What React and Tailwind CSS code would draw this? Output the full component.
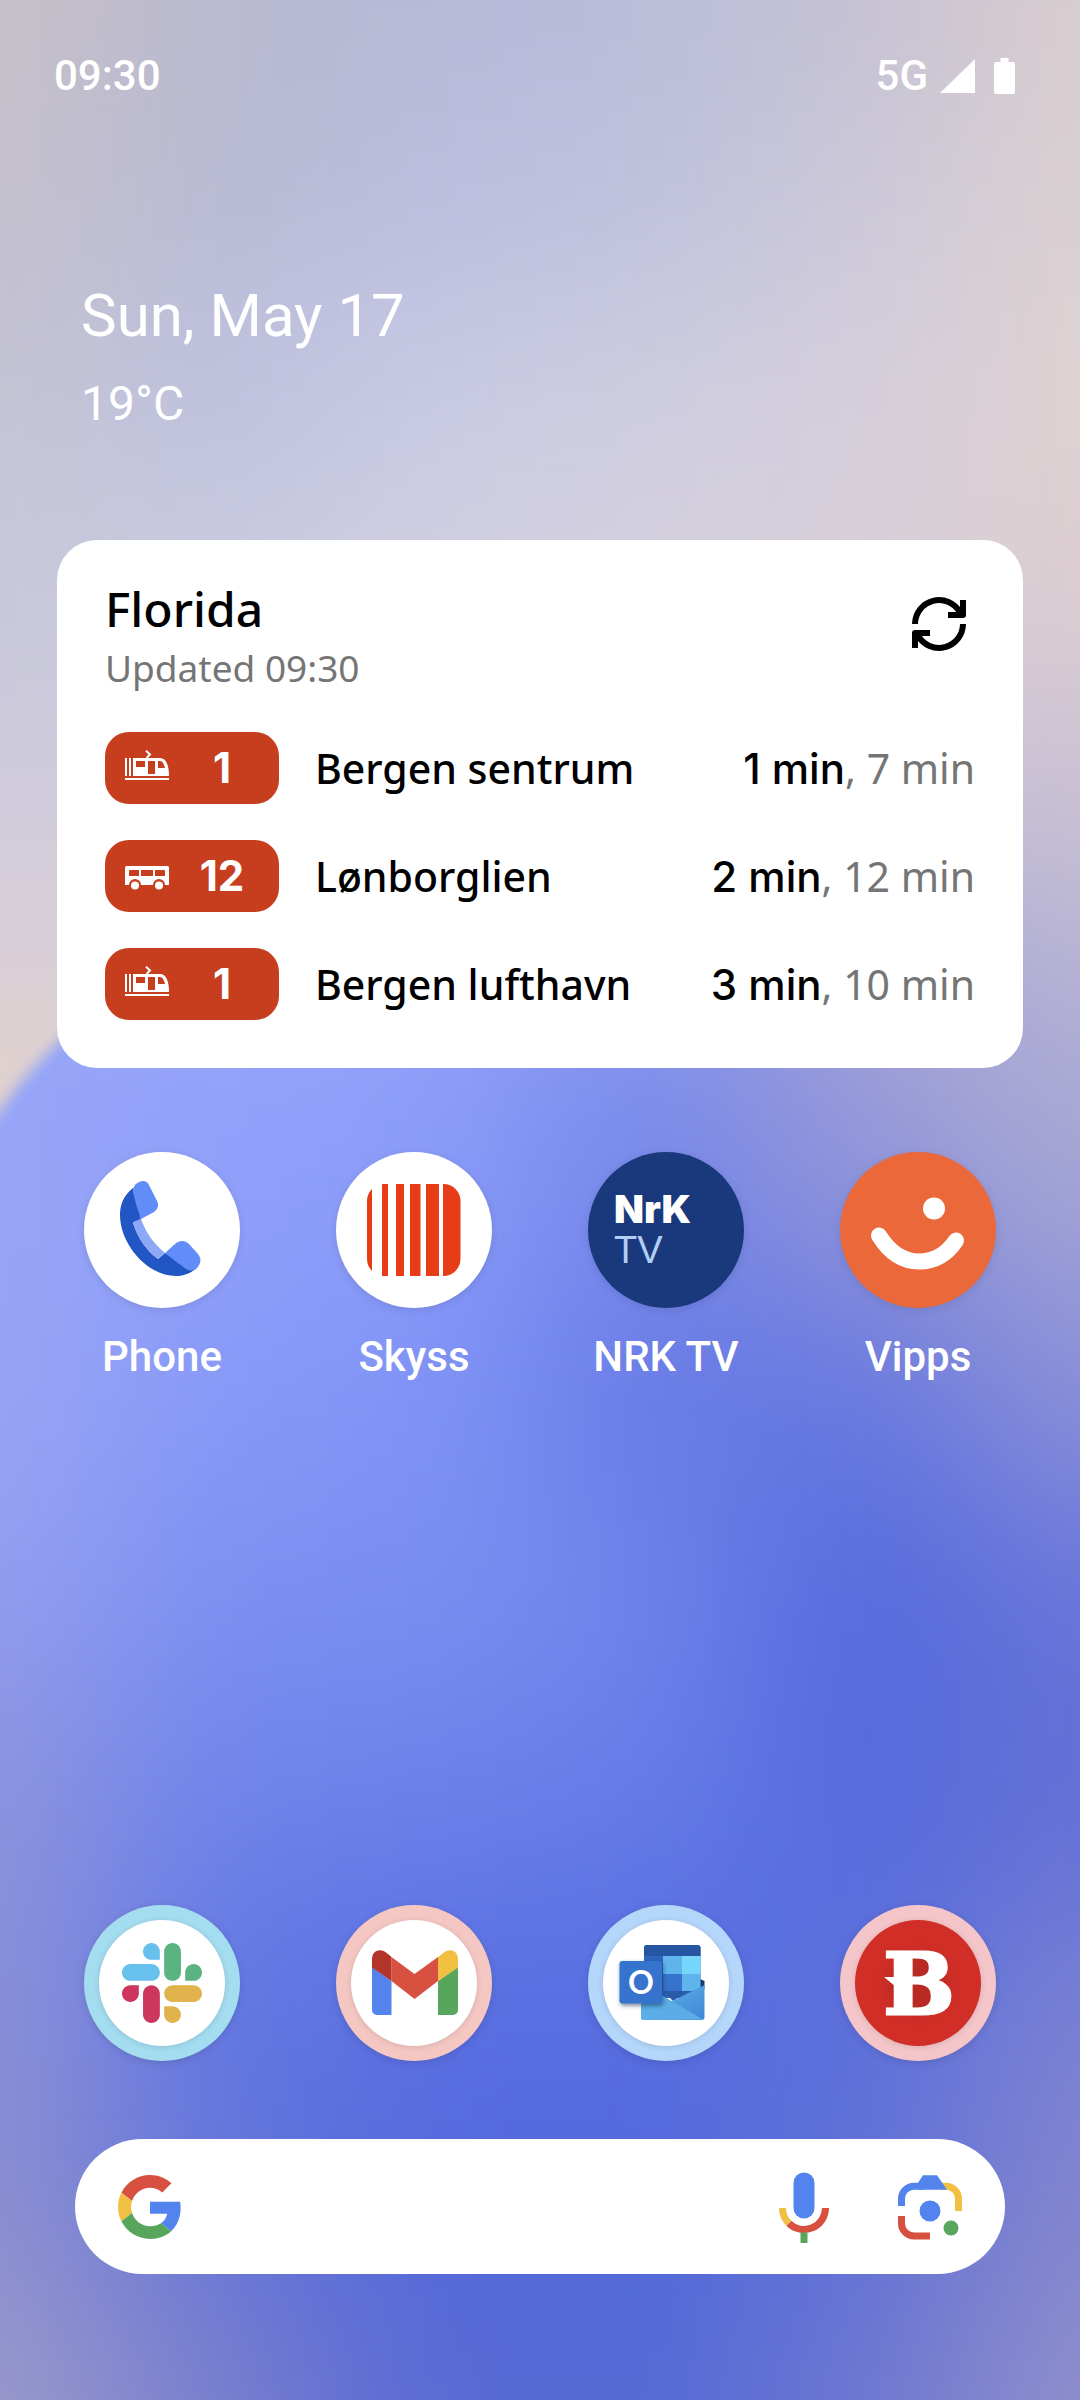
import { useState } from 'react';
import { clsx } from 'clsx';

// Colour field of the wallpaper, left to right, one row every 200 units
const wallpaperRows = [
  ['#c8c0c6', '#b9b9cf', '#b6b9d7', '#b9bcd9', '#c5c1d3', '#d9cdce'],
  ['#c4c0cc', '#b8bad4', '#babddd', '#bfc1de', '#cbc8d8', '#dbd1d3'],
  ['#c5c4d5', '#bec1df', '#c9cbe5', '#cecde0', '#d5cfdc', '#dfd2d1'],
  ['#c9c8da', '#cacbe0', '#d0cee0', '#d5d0dd', '#d8cfd8', '#dccdd0'],
  ['#cdcbdb', '#cccbdd', '#d4cedc', '#d8d0da', '#c6bfd6', '#c9c0d4'],
  ['#96a5f9', '#94a3fa', '#90a0f8', '#7f90ee', '#a09fd6', '#b3b1d4'],
  ['#98a6f6', '#8f9ffa', '#8a9bf9', '#7385e8', '#8f93d9', '#a3a3d4'],
  ['#98a5f5', '#8799f7', '#8093f5', '#677ae7', '#6577df', '#8a90d8'],
  ['#929df0', '#7c8ff0', '#7b8ef0', '#6f84ec', '#5468dd', '#6876da'],
  ['#8b93dc', '#7083ea', '#6b80ea', '#667be8', '#5569de', '#636fd4'],
  ['#8a91d8', '#6277e4', '#5a6fe2', '#586de0', '#5a6edc', '#7a82d4'],
  ['#8c8fd0', '#6474d8', '#5468dc', '#5268dc', '#6070d6', '#8486ce'],
  ['#9c9acb', '#7a80cc', '#5a6ad4', '#5569d6', '#6e78d0', '#9190cb'],
];

const Wallpaper = () => (
  <svg
    className="absolute inset-0 h-full w-full"
    viewBox="0 0 1080 2400"
    preserveAspectRatio="none"
    aria-hidden="true"
  >
    <defs>
      <filter id="field-blur" filterUnits="userSpaceOnUse" x="-300" y="-300" width="1680" height="3000" colorInterpolationFilters="sRGB">
        <feGaussianBlur stdDeviation="90" />
      </filter>
      <filter id="edge-blur" filterUnits="userSpaceOnUse" x="-200" y="500" width="600" height="800" colorInterpolationFilters="sRGB">
        <feGaussianBlur stdDeviation="7" />
      </filter>
      <linearGradient id="edge-fill" gradientUnits="userSpaceOnUse" x1="0" y1="640" x2="0" y2="1110">
        <stop offset="0" stopColor="#cac8da" stopOpacity="0" />
        <stop offset="0.3" stopColor="#cfcbdb" />
        <stop offset="0.65" stopColor="#d9cfd8" />
        <stop offset="1" stopColor="#e0d1ca" />
      </linearGradient>
    </defs>
    <rect width="1080" height="2400" fill="#8a91d8" />
    <g filter="url(#field-blur)">
      {wallpaperRows.map((row, r) =>
        row.map((color, c) => {
          // outer cells run far past the frame so the blur keeps their colour
          const x = c === 0 ? -400 : c * 216 - 109;
          const y = r === 0 ? -400 : r * 200 - 101;
          const right = c === 5 ? 1500 : c * 216 + 109;
          const bottom = r === 12 ? 2900 : r * 200 + 101;
          return <rect key={`${r}-${c}`} x={x} y={y} width={right - x} height={bottom - y} fill={color} />;
        })
      )}
    </g>
    <path
      d="M-150 600H240V910C160 950 100 1002 57 1043C36 1064 18 1084 0 1110L-150 1300Z"
      fill="url(#edge-fill)"
      filter="url(#edge-blur)"
    />
  </svg>
);

const TramIcon = () => (
  <svg className="h-12 w-11 shrink-0" viewBox="0 0 44 48" fill="#fff" aria-hidden="true">
    <g transform="translate(0 6)">
      <path d="M0 8h2v18H0zM4 8h2v18H4zM0 28h44v2H0z" />
      <path
        fillRule="evenodd"
        d="M8 8h27c6 0 9 7 9 18H8zM11 11v6h9v-6zM23 11v13h7V11zM33 11v7h7c-1-4-2.500-7-5-7z"
      />
      <path d="M21 .8 25 4.500 21.500 8" fill="none" stroke="#fff" strokeWidth="2" />
    </g>
  </svg>
);

const BusIcon = () => (
  <svg className="h-12 w-11 shrink-0" viewBox="0 0 44 48" fill="#fff" aria-hidden="true">
    <g transform="translate(0 14)">
      <path
        fillRule="evenodd"
        d="M1.500 0h41A1.500 1.500 0 0 1 44 1.500V19h-4a6 6 0 0 0-12 0H16a6 6 0 0 0-12 0H0V1.500A1.500 1.500 0 0 1 1.500 0zM5 4a1 1 0 0 0-1 1v5h10V4zM16 4v6h12V4zM30 4v6h10V5a1 1 0 0 0-1-1z"
      />
      <circle cx="10" cy="19.500" r="4" />
      <circle cx="34" cy="19.500" r="4" />
    </g>
  </svg>
);

const RefreshIcon = () => (
  <svg className="h-18 w-18" viewBox="0 0 72 72" fill="none" stroke="#000" strokeWidth="6" aria-hidden="true">
    <path d="M12 36A24 24 0 0 1 57 24.500" />
    <path d="M60 36A24 24 0 0 1 15 47.500" />
    <path d="M60 12v15H45" strokeLinejoin="round" />
    <path d="M12 60V45H27" strokeLinejoin="round" />
    <path d="M52 25l6-5v6zM20 47l-6 5v-6z" fill="#000" strokeWidth="1" />
  </svg>
);

const PhoneLogo = () => (
  <svg viewBox="0 0 156 156" className="h-full w-full" aria-hidden="true">
    <path
      d="M49 36C40 43 36 52 36 63C36 92 63 124 92 124C98 124 105 122 110 118L81 101L74 107C62 98 54 86 49 71L57 67Z"
      fill="#2156c4"
    />
    <path d="M49 70L57 67C62 81 70 92 81 101L74 107C62 98 53 86 49 70Z" fill="#8ea8f8" />
    <path d="M49 40C48 34 54 29 59 29C62 29 64 31 65 33L73 49C75 53 74 57 70 60L57 67Q52 54 49 40Z" fill="#628cf7" />
    <path d="M81 101L91 92C95 88 101 88 105 92L114 102C118 107 117 112 112 117C110 119 106 119 102 117Q91 109 81 101Z" fill="#628cf7" />
  </svg>
);

const SkyssLogo = () => (
  <svg viewBox="0 0 156 156" className="h-full w-full" aria-hidden="true">
    <clipPath id="skyss-clip">
      <rect x="31" y="32" width="93.500" height="92" rx="17" />
    </clipPath>
    <g clipPath="url(#skyss-clip)" fill="#e83c17">
      <rect x="31" y="32" width="5" height="92" />
      <rect x="46" y="32" width="6" height="92" />
      <rect x="60" y="32" width="8" height="92" />
      <rect x="74" y="32" width="10.500" height="92" />
      <rect x="90" y="32" width="13" height="92" />
      <rect x="107" y="32" width="18" height="92" />
    </g>
  </svg>
);

const NrkLogo = () => (
  <svg viewBox="0 0 156 156" className="h-full w-full" aria-hidden="true">
    <text x="26" y="71" fontFamily="Inter, sans-serif" fontWeight="900" fontSize="39" fill="#fff">NrK</text>
    <text x="26" y="111" fontFamily="'Liberation Sans', sans-serif" fontSize="38" fill="#b3cef5">TV</text>
  </svg>
);

const VippsLogo = () => (
  <svg viewBox="0 0 156 156" className="h-full w-full" aria-hidden="true">
    <circle cx="94" cy="56.500" r="11" fill="#fff" />
    <path
      d="M39 83.500C48 98 61 109.500 79 109.500C95 109.500 107 102 116 88.500"
      fill="none"
      stroke="#fff"
      strokeWidth="16"
      strokeLinecap="round"
    />
  </svg>
);

const SlackLogo = () => (
  <svg viewBox="0 0 122.800 122.800" className="h-20 w-20" aria-hidden="true">
    <path fill="#cd375d" d="M25.800 77.600c0 7.100-5.800 12.900-12.900 12.900S0 84.700 0 77.600s5.800-12.900 12.900-12.900h12.900v12.900zM32.300 77.600c0-7.100 5.800-12.900 12.900-12.900s12.900 5.800 12.900 12.900v32.300c0 7.100-5.800 12.900-12.900 12.900s-12.900-5.800-12.900-12.900V77.600z" />
    <path fill="#67c1ec" d="M45.200 25.800c-7.100 0-12.900-5.800-12.900-12.900S38.100 0 45.200 0s12.900 5.800 12.900 12.900v12.900H45.200zM45.200 32.300c7.100 0 12.900 5.800 12.900 12.900s-5.800 12.900-12.900 12.900H12.900C5.800 58.100 0 52.300 0 45.200s5.800-12.900 12.900-12.900h32.300z" />
    <path fill="#5bb381" d="M97 45.200c0-7.100 5.800-12.900 12.900-12.900s12.900 5.800 12.900 12.900-5.800 12.900-12.900 12.900H97V45.200zM90.500 45.200c0 7.100-5.800 12.900-12.900 12.900s-12.900-5.800-12.900-12.900V12.900C64.700 5.800 70.500 0 77.600 0s12.900 5.800 12.900 12.900v32.300z" />
    <path fill="#e1b34c" d="M77.600 97c7.100 0 12.900 5.800 12.900 12.900s-5.800 12.900-12.900 12.900-12.900-5.800-12.900-12.900V97h12.900zM77.600 90.500c-7.100 0-12.900-5.800-12.900-12.900s5.800-12.900 12.900-12.900h32.300c7.100 0 12.900 5.800 12.900 12.900s-5.800 12.900-12.900 12.900H77.600z" />
  </svg>
);

const GmailLogo = () => (
  <svg viewBox="34 44 88 68" className="h-[68px] w-[88px]" aria-hidden="true">
    <path d="M36 62l19.500 14v34H41a5 5 0 0 1-5-5z" fill="#5384ee" />
    <path d="M102 76l20-14v43a5 5 0 0 1-5 5h-15z" fill="#58a55c" />
    <path d="M55.500 52L78.500 69L102 52V76L78.500 94L55.500 76Z" fill="#d8503f" />
    <path d="M36 62.500V54C36 45 45.500 42 52 49L55.500 52V76Z" fill="#b3352a" />
    <path d="M122 62.500V54C122 45 112.500 42 106 49L102 52V76Z" fill="#f1bf42" />
  </svg>
);

const OutlookLogo = () => (
  <svg viewBox="33 38 90 80" className="h-20 w-[90px] overflow-visible" aria-hidden="true">
    <defs>
      <linearGradient id="flap" x1="0" y1="0" x2="1" y2="1">
        <stop offset="0" stopColor="#62b7ec" />
        <stop offset="1" stopColor="#3f86d6" />
      </linearGradient>
      <filter id="tile-shadow" x="-30%" y="-30%" width="160%" height="170%">
        <feDropShadow dx="1" dy="2" stdDeviation="2" floodColor="#0b2a4a" floodOpacity="0.6" />
      </filter>
    </defs>
    <path d="M112 74l4.500 2v8l-4.500 1z" fill="#173a6b" />
    <path d="M59 40h50.500a3 3 0 0 1 3 3v50H56V43a3 3 0 0 1 3-3z" fill="#2c66be" />
    <path d="M59 40h50.500a3 3 0 0 1 3 3v8H56v-8a3 3 0 0 1 3-3z" fill="#2456a2" />
    <rect x="75" y="51" width="19" height="18" fill="#5fb4eb" />
    <rect x="94" y="51" width="18.500" height="18" fill="#76d5fa" />
    <rect x="75" y="69" width="19" height="17" fill="#3673cd" />
    <rect x="94" y="69" width="18.500" height="17" fill="#5fb4eb" />
    <path d="M75 86h26l-16 10z" fill="#2a5ba8" />
    <path d="M116.500 80L53 112a3 3 0 0 0 3 3h57.500a3 3 0 0 0 3-3z" fill="url(#flap)" />
    <path d="M53 78L115 114.500L56 115a3 3 0 0 1-3-3z" fill="#5aade6" />
    <rect x="31.500" y="56" width="42.500" height="42.500" rx="3" fill="#3673cd" filter="url(#tile-shadow)" />
    <text x="53" y="89" textAnchor="middle" fontFamily="Lato, sans-serif" fontWeight="700" fontSize="32" fill="#fff">O</text>
  </svg>
);

const BitLogo = () => (
  <svg viewBox="0 0 126 126" className="h-full w-full" aria-hidden="true">
    <defs>
      <radialGradient id="bit-glow">
        <stop offset="0.5" stopColor="#b82a23" />
        <stop offset="1" stopColor="#d02e26" stopOpacity="0" />
      </radialGradient>
    </defs>
    <ellipse cx="62" cy="64" rx="44" ry="44" fill="url(#bit-glow)" />
    <text
      x="64"
      y="94"
      textAnchor="middle"
      fontFamily="'DejaVu Serif', serif"
      fontWeight="700"
      fontSize="84"
      fill="#fff"
      stroke="#fff"
      strokeWidth="3"
    >
      B
    </text>
    <path d="M29 57h12v10z" fill="#fff" />
  </svg>
);

const GoogleLogo = () => (
  <svg viewBox="0 0 48 48" className="h-16 w-16 shrink-0" aria-hidden="true">
    <path fill="#d8503f" d="M24 9.500c3.540 0 6.710 1.220 9.210 3.600l6.850-6.850C35.900 2.380 30.470 0 24 0 14.620 0 6.510 5.380 2.560 13.220l7.980 6.190C12.430 13.720 17.740 9.500 24 9.500z" />
    <path fill="#5384ee" d="M46.980 24.550c0-1.570-.15-3.090-.38-4.550H24v9.020h12.940c-.58 2.960-2.260 5.480-4.780 7.180l7.730 6c4.510-4.180 7.090-10.360 7.090-17.650z" />
    <path fill="#f1bf42" d="M10.530 28.590c-.48-1.450-.76-2.990-.76-4.590s.27-3.140.76-4.590l-7.980-6.190C.92 16.460 0 20.120 0 24c0 3.880.92 7.540 2.560 10.780l7.970-6.190z" />
    <path fill="#58a55c" d="M24 48c6.480 0 11.930-2.130 15.890-5.810l-7.730-6c-2.150 1.450-4.920 2.300-8.160 2.300-6.260 0-11.570-4.220-13.470-9.910l-7.980 6.190C6.510 42.620 14.620 48 24 48z" />
  </svg>
);

const MicIcon = () => (
  <svg viewBox="0 0 72 72" className="h-18 w-18" fill="none" strokeWidth="7" aria-hidden="true">
    <rect x="25.500" y="1.500" width="21" height="46" rx="10.500" fill="#5384ee" />
    <path d="M57.500 37A21.500 21.500 0 0 1 20.800 52.200" stroke="#d8503f" />
    <path d="M14.500 37A21.500 21.500 0 0 0 20.800 52.200" stroke="#f1bf42" />
    <path d="M36 61.500V72" stroke="#58a55c" />
  </svg>
);

const LensIcon = () => (
  <svg viewBox="0 0 72 72" className="h-18 w-18" fill="none" strokeWidth="7" aria-hidden="true">
    <path d="M46 15.200H52A12.500 12.500 0 0 1 64.500 27.700V40" stroke="#f1bf42" />
    <path d="M7.500 35V27.700A12.500 12.500 0 0 1 20 15.200H30" stroke="#5384ee" />
    <path d="M24 18.700V11.700L29 4.300H43L53 18.700Z" fill="#5384ee" />
    <path d="M7.500 45V52.500A12.500 12.500 0 0 0 20 65H36" stroke="#d8503f" />
    <circle cx="36" cy="40" r="10.500" fill="#5384ee" />
    <circle cx="57" cy="57" r="7.500" fill="#58a55c" />
  </svg>
);

const departures = [
  { id: 'sentrum', Icon: TramIcon, line: '1', destination: 'Bergen sentrum', next: '1 min', later: '7 min' },
  { id: 'lonborglien', Icon: BusIcon, line: '12', destination: 'Lønborglien', next: '2 min', later: '12 min' },
  { id: 'lufthavn', Icon: TramIcon, line: '1', destination: 'Bergen lufthavn', next: '3 min', later: '10 min' },
];

const apps = [
  { name: 'Phone', Logo: PhoneLogo, bg: 'bg-white' },
  { name: 'Skyss', Logo: SkyssLogo, bg: 'bg-white' },
  { name: 'NRK TV', Logo: NrkLogo, bg: 'bg-[#1a397c]' },
  { name: 'Vipps', Logo: VippsLogo, bg: 'bg-[#eb683b]' },
];

const dockApps = [
  { name: 'Slack', Logo: SlackLogo, ring: 'bg-[#a4dcf0]', bg: 'bg-white' },
  { name: 'Gmail', Logo: GmailLogo, ring: 'bg-[#f4c7c3]', bg: 'bg-white' },
  { name: 'Outlook', Logo: OutlookLogo, ring: 'bg-[#b4d6fa]', bg: 'bg-white' },
  { name: 'Bitdefender', Logo: BitLogo, ring: 'bg-[#f4c6ca]', bg: 'bg-[#d02e26]' },
];

const StatusBar = () => (
  <header className="flex items-center justify-between pt-[52px] pr-[65px] pl-[54px] text-[42px] leading-[48px] font-medium">
    <span>09:30</span>
    <div className="flex items-center gap-3">
      <span>5G</span>
      <svg className="h-[34px] w-[35px]" viewBox="0 0 35 34" fill="#fff" aria-hidden="true">
        <path d="M35 0v34H0z" />
      </svg>
      <svg className="ml-[7px] h-[36px] w-[21px]" viewBox="0 0 21 36" fill="#fff" aria-hidden="true">
        <path d="M6.500 0h8v4H19a2 2 0 0 1 2 2v28a2 2 0 0 1-2 2H2a2 2 0 0 1-2-2V6a2 2 0 0 1 2-2h4.500z" />
      </svg>
    </div>
  </header>
);

const DeparturesCard = () => (
  <section
    className="mx-[57px] mt-27 rounded-[40px] bg-white p-12 font-['Noto_Sans',sans-serif] text-black"
    aria-label="Departures"
  >
    <div className="flex items-start justify-between">
      <div>
        <h1 className="text-[48px] leading-[42px] font-medium">Florida</h1>
        <p className="mt-3.5 text-[37px] leading-[48px] text-[#757575]">Updated 09:30</p>
      </div>
      <button type="button" aria-label="Refresh">
        <RefreshIcon />
      </button>
    </div>

    <ul className="mt-10 flex flex-col gap-9">
      {departures.map(({ id, Icon, line, destination, next, later }) => (
        <li key={id} className="flex items-center text-[41px] leading-[48px]">
          <div className="flex h-18 w-[174px] shrink-0 items-center rounded-3xl bg-[#c73e1f] pr-1 pl-5 font-['Inter',sans-serif] text-[42px] font-bold text-white">
            <Icon />
            <span className="flex-1 text-center">{line}</span>
          </div>
          <span className="ml-9 flex-1 font-medium">{destination}</span>
          <span className="text-[#757575]">
            <span className="font-['Inter',sans-serif] text-[42px] font-medium text-black">{next}</span>, {later}
          </span>
        </li>
      ))}
    </ul>
  </section>
);

const SearchBar = () => {
  const [query, setQuery] = useState('');

  return (
    <form
      role="search"
      onSubmit={(e) => e.preventDefault()}
      className="mx-[75px] mt-[78px] mb-[126px] flex h-[135px] items-center rounded-full bg-white pr-[39px] pl-[43px]"
    >
      <GoogleLogo />
      <input
        type="text"
        aria-label="Search"
        value={query}
        onChange={(e) => setQuery(e.target.value)}
        className="mx-6 min-w-0 flex-1 bg-transparent text-[42px] text-gray-800 outline-none"
      />
      <div className="flex gap-[54px]">
        <button type="button" aria-label="Voice search"><MicIcon /></button>
        <button type="button" aria-label="Search with camera"><LensIcon /></button>
      </div>
    </form>
  );
};

const App = () => (
  <div className="relative min-h-screen w-full overflow-hidden font-['Roboto',sans-serif] text-white">
    <Wallpaper />

    <main className="relative flex min-h-screen flex-col">
      <StatusBar />

      <div className="mt-45 px-[81px]">
        <p className="text-[60px] leading-[72px]">Sun, May 17</p>
        <p className="mt-6 text-[48px] leading-[56px]">19°C</p>
      </div>

      <DeparturesCard />

      {/* Home screen apps */}
      <div className="mt-21 grid grid-cols-4 px-9">
        {apps.map(({ name, Logo, bg }) => (
          <button key={name} type="button" className="flex flex-col items-center gap-[25px]">
            <span className={clsx('h-39 w-39 overflow-hidden rounded-full shadow-[0_2px_8px_rgba(0,0,0,0.1)]', bg)}>
              <Logo />
            </span>
            <span className="text-[42px] leading-[48px] font-medium">{name}</span>
          </button>
        ))}
      </div>

      {/* Dock */}
      <div className="mt-auto grid grid-cols-4 px-9">
        {dockApps.map(({ name, Logo, ring, bg }) => (
          <button key={name} type="button" aria-label={name} className="flex justify-center">
            <span className={clsx('flex h-39 w-39 items-center justify-center rounded-full shadow-[0_2px_8px_rgba(0,0,0,0.12)]', ring)}>
              <span className={clsx('flex h-[126px] w-[126px] items-center justify-center rounded-full shadow-[0_1px_6px_rgba(0,0,0,0.12)]', bg)}>
                <Logo />
              </span>
            </span>
          </button>
        ))}
      </div>

      <SearchBar />
    </main>
  </div>
);

export default App;
